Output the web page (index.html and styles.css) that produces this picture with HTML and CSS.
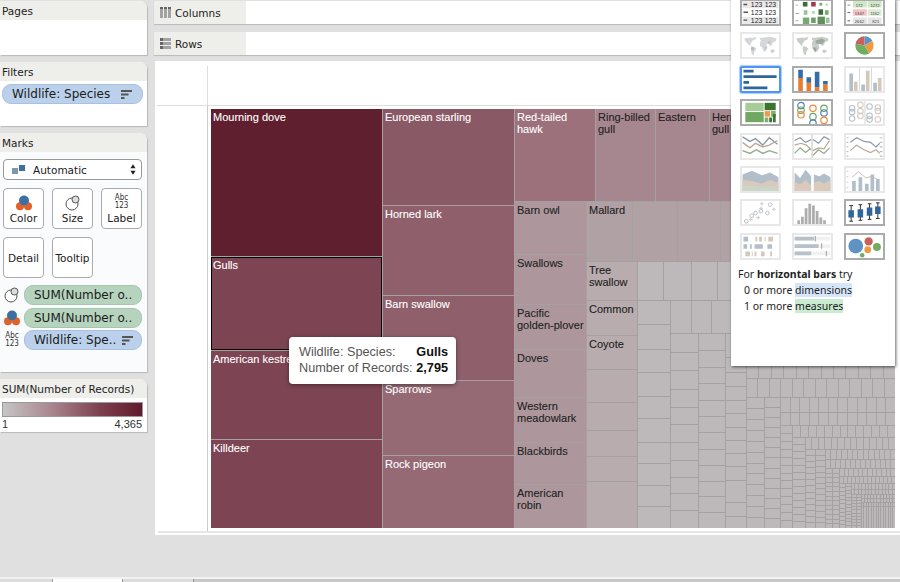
FILE: index.html
```html
<!DOCTYPE html>
<html lang="en">
<head>
<meta charset="utf-8">
<title>Wildlife treemap</title>
<link rel="stylesheet" href="styles.css">
</head>
<body>
<div class="app">
  <div class="workspace">
    <aside class="sidebar">
      <section class="card card-pages">
        <h2 class="card-title">Pages</h2>
      </section>
      <section class="card card-filters">
        <h2 class="card-title">Filters</h2>
        <div class="pill pill-blue pill-wide">
          <span class="pill-text">Wildlife: Species</span>
          <svg class="sort-icon" viewBox="0 0 11 9"><path d="M0 0h11v2H0zM0 3.500h7.500v2H0zM0 7h3.500v2H0z"/></svg>
        </div>
      </section>
      <section class="card card-marks">
        <h2 class="card-title">Marks</h2>
        <div class="mark-select">
          <svg class="auto-icon" viewBox="0 0 14 10"><path fill="#7f96b2" d="M0 3h6v6H0z"/><path fill="#3f6f9f" d="M7 0h6v6H7z"/></svg>
          <span class="mark-select-text">Automatic</span>
          <svg class="updown" viewBox="0 0 7 12"><path d="M3.500 0 6.500 4.500H.5zM3.500 12 .5 7.500h6z"/></svg>
        </div>
        <div class="mark-buttons">
          <div class="mark-btn">
            <svg class="btn-icon" viewBox="0 0 18 16"><circle cx="5" cy="11.300" r="4" fill="#e0622b"/><circle cx="13" cy="11.300" r="4" fill="#e0622b"/><circle cx="9" cy="5.500" r="5" fill="#3e6f9e"/></svg>
            <span>Color</span>
          </div>
          <div class="mark-btn">
            <svg class="btn-icon" viewBox="0 0 18 16"><circle cx="8" cy="9" r="6" fill="#fff" stroke="#555" stroke-width="1"/><circle cx="11.500" cy="4.500" r="3.500" fill="#ddd" stroke="#555" stroke-width="1"/></svg>
            <span>Size</span>
          </div>
          <div class="mark-btn">
            <div class="abc"><span>Abc</span><span>123</span></div>
            <span>Label</span>
          </div>
          <div class="mark-btn mark-btn-plain"><span>Detail</span></div>
          <div class="mark-btn mark-btn-plain"><span>Tooltip</span></div>
        </div>
        <div class="mark-fields">
          <div class="mark-field">
            <svg class="field-icon" viewBox="0 0 18 16"><circle cx="8" cy="9" r="6" fill="#fff" stroke="#555" stroke-width="1"/><circle cx="11.500" cy="4.500" r="3.500" fill="#ddd" stroke="#555" stroke-width="1"/></svg>
            <div class="pill pill-green"><span class="pill-text">SUM(Number o..</span></div>
          </div>
          <div class="mark-field">
            <svg class="field-icon" viewBox="0 0 18 16"><circle cx="5" cy="11.300" r="4" fill="#e0622b"/><circle cx="13" cy="11.300" r="4" fill="#e0622b"/><circle cx="9" cy="5.500" r="5" fill="#3e6f9e"/></svg>
            <div class="pill pill-green"><span class="pill-text">SUM(Number o..</span></div>
          </div>
          <div class="mark-field">
            <div class="abc abc-small"><span>Abc</span><span>123</span></div>
            <div class="pill pill-blue">
              <span class="pill-text">Wildlife: Spe..</span>
              <svg class="sort-icon" viewBox="0 0 11 9"><path d="M0 0h11v2H0zM0 3.500h7.500v2H0zM0 7h3.500v2H0z"/></svg>
            </div>
          </div>
        </div>
      </section>
      <section class="card card-legend">
        <h2 class="card-title">SUM(Number of Records)</h2>
        <div class="ramp"></div>
        <div class="ramp-labels"><span>1</span><span>4,365</span></div>
      </section>
    </aside>

    <main class="main">
      <div class="shelf">
        <div class="shelf-label">
          <svg class="shelf-icon" viewBox="0 0 11 11"><path d="M0 0h3v11H0zM4 0h3v11H4zM8 0h3v11H8z"/><path class="shelf-icon-head" d="M0 0h3v2H0zM4 0h3v2H4zM8 0h3v2H8z"/></svg>
          <span>Columns</span>
        </div>
        <div class="shelf-drop"></div>
      </div>
      <div class="shelf shelf-rows">
        <div class="shelf-label">
          <svg class="shelf-icon" viewBox="0 0 11 11"><path d="M0 0h11v3H0zM0 4h11v3H0zM0 8h11v3H0z"/><path class="shelf-icon-head" d="M0 0h3v3H0zM0 4h3v3H0zM0 8h3v3H0z"/></svg>
          <span>Rows</span>
        </div>
        <div class="shelf-drop"></div>
      </div>

      <div class="view">
        <div class="view-grid">
          <div class="view-corner"></div>
          <div class="view-head"></div>
          <div class="view-side"></div>
          <div class="view-pane">
            <div class="treemap">
              <div class="col w171">
                <div class="tile t-dove h147"><span>Mourning dove</span></div>
                <div class="tile t-gull h93 picked"><span>Gulls</span></div>
                <div class="tile t-gull h88"><span>American kestrel</span></div>
                <div class="tile t-gull fill"><span>Killdeer</span></div>
              </div>
              <div class="col w131">
                <div class="tile t-star h96"><span>European starling</span></div>
                <div class="tile t-star2 h89"><span>Horned lark</span></div>
                <div class="tile t-star2 h84"><span>Barn swallow</span></div>
                <div class="tile t-star3 h74"><span>Sparrows</span></div>
                <div class="tile t-star3 fill"><span>Rock pigeon</span></div>
              </div>
              <div class="col fill">
                <div class="row h92">
                  <div class="tile t-hawk w80"><span>Red-tailed<br>hawk</span></div>
                  <div class="tile t-ring w59 dark"><span>Ring-billed<br>gull</span></div>
                  <div class="tile t-ring w53 dark"><span>Eastern</span></div>
                  <div class="tile t-ring fill dark"><span>Herring<br>gull</span></div>
                </div>
                <div class="row fill">
                  <div class="col w71">
                    <div class="tile t-owl h52 dark"><span>Barn owl</span></div>
                    <div class="tile t-owl h49 dark"><span>Swallows</span></div>
                    <div class="tile t-owl h44 dark"><span>Pacific<br>golden-plover</span></div>
                    <div class="tile t-owl h47 dark"><span>Doves</span></div>
                    <div class="tile t-owl h44 dark"><span>Western<br>meadowlark</span></div>
                    <div class="tile t-owl h41 dark"><span>Blackbirds</span></div>
                    <div class="tile t-owl fill dark"><span>American<br>robin</span></div>
                  </div>
                  <div class="col fill">
                    <div class="row h59">
                      <div class="tile t-mall w45 dark"><span>Mallard</span></div>
                      <div class="tile t-mall w44"></div>
                      <div class="tile t-mall w42"></div>
                      <div class="tile t-mall fill"></div>
                    </div>
                    <div class="row fill">
                      <div class="col w50">
                        <div class="tile t-swal h38 dark"><span>Tree<br>swallow</span></div>
                        <div class="tile t-swal h34 dark"><span>Common</span></div>
                        <div class="tile t-swal h33 dark"><span>Coyote</span></div>
                        <div class="tile t-swal h32"></div>
                        <div class="tile t-swal h27"></div>
                        <div class="tile t-swal h25"></div>
                        <div class="tile t-swal h24"></div>
                        <div class="tile t-swal fill"></div>
                      </div>
                      <div class="col fill">
                        <div class="row h38" data-cells="26,28,26,30,30,30,30"></div>
                        <div class="row fill">
                          <div class="col w32" data-cells="24,25,23,24,22,24,21,22,21"></div>
                          <div class="col fill">
                            <div class="row h32" data-cells="21,20,20,20,20,20,20,20,20,20,20"></div>
                            <div class="row fill">
                              <div class="col w27" data-cells="19,18,19,18,17,18,18,17,16,17"></div>
                              <div class="col w26" data-cells="17,17,16,17,16,16,17,16,16,15,16"></div>
                              <div class="col w20" data-cells="24,15,14,14,13,14,13,13,13,14,22,14"></div>
                              <div class="spiral fill" id="spiral"></div>
                            </div>
                          </div>
                        </div>
                      </div>
                    </div>
                  </div>
                </div>
              </div>
            </div>
          </div>
        </div>
        <div class="view-foot"></div>
      </div>

      <div class="tooltip">
        <span class="tip-key">Wildlife: Species:</span><b class="tip-val">Gulls</b>
        <span class="tip-key">Number of Records:</span><b class="tip-val">2,795</b>
      </div>

      <div class="showme">
        <div class="thumbs">
          <div class="thumb on"><svg viewBox="0 0 39 25"><path fill="#e9e9e9" d="M0 0h39v8H0zM0 17h39v8H0z"/><path fill="#555" d="M1 3h4v1.500H1zM1 11.500h5V13H1zM1 20h4v1.500H1z"/><g class="th-num"><text x="9" y="7">123</text><text x="24" y="7">123</text><text x="9" y="15.500">123</text><text x="24" y="15.500">123</text><text x="9" y="24">123</text><text x="24" y="24">123</text></g></svg></div>
          <div class="thumb on"><svg viewBox="0 0 39 25"><path fill="#aaa" d="M1 4h3v1H1zM1 13h4v1H1zM1 21h3v1H1z"/><path fill="#3d6b39" d="M9 1h5v5H9z"/><path fill="#a33a4e" d="M18 1h5v5h-5z"/><path fill="#7aa874" d="M27 2h3v3h-3z"/><path fill="#a6c7a1" d="M34 3h2v2h-2z"/><path fill="#9dc096" d="M10 10h4v5h-4z"/><path fill="#b9d2b4" d="M19 11h3v3h-3z"/><path fill="#3d6b39" d="M26 9h5v6h-5z"/><path fill="#7aa874" d="M33 10h4v5h-4z"/><path fill="#7aa874" d="M9 18h7v7H9z"/><path fill="#6d9d67" d="M18 18h5v6h-5z"/><path fill="#5d915a" d="M25 17h8v8h-8z"/><path fill="#9dc096" d="M34 18h4v6h-4z"/></svg></div>
          <div class="thumb on"><svg viewBox="0 0 39 25"><path fill="#cfe6c7" d="M7 0h15v7H7zM23 0h15v7H23z"/><path fill="#f3c3c6" d="M7 9h15v7H7z"/><path fill="#dcebd7" d="M23 9h15v7H23z"/><path fill="#e5e5e5" d="M7 18h15v7H7zM23 18h15v7H23z"/><path fill="#666" d="M1 12h3v1H1zM1 21h3v1H1zM1 4h3v1H1z"/><g class="th-tiny"><text x="10" y="6">172</text><text x="26" y="6">1272</text><text x="9" y="15">1347</text><text x="26" y="15">1162</text><text x="9" y="24">2662</text><text x="28" y="24">821</text></g></svg></div>

          <div class="thumb off"><svg viewBox="0 0 39 25"><g fill="#b9bcc0"><path d="M2 5l5-1 5 0 3-1-1 3-3 1-2 3-1 3-3-3-2-2z"/><path d="M9 13l4 1 2 2-2 3-1 4-2-1-1-5z"/><path d="M19 4l3 0 8-1 7 2-1 3-3 1-1 3-2 1-2-2-2 0 1 4-2 4h-2l-2-5-2-1 0-4 1-2-1-1z"/><path d="M31 17l3 0 1 2-3 2-2-2z"/></g><g fill="#7c8ea0"><circle cx="11" cy="16" r="1.800"/><circle cx="25" cy="15" r="1"/><circle cx="29" cy="9" r="1.200"/><circle cx="33" cy="18" r=".9"/></g></svg></div>
          <div class="thumb off"><svg viewBox="0 0 39 25"><g fill="#a3ada2"><path d="M2 5l5-1 5 0 3-1-1 3-3 1-2 3-1 3-3-3-2-2z"/><path d="M9 13l4 1 2 2-2 3-1 4-2-1-1-5z"/><path d="M19 4l3 0 8-1 7 2-1 3-3 1-1 3-2 1-2-2-2 0 1 4-2 4h-2l-2-5-2-1 0-4 1-2-1-1z"/><path d="M31 17l3 0 1 2-3 2-2-2z"/></g><path fill="#5f6f5f" d="M23 7l7-2 3 2-3 4-4 0-3-1zM19 14l5 1-1 5-2-2z"/></svg></div>
          <div class="thumb on"><svg viewBox="0 0 39 25"><path fill="#c8605c" d="M19.500 12.500V2.500a10 10 0 0 0-9.800 8.200z"/><path fill="#5f93c4" d="M19.500 12.500V2.500a10 10 0 0 1 8.600 5z"/><path fill="#ef9a43" d="M19.500 12.500l8.600-5a10 10 0 0 1-3.500 13.600z"/><path fill="#70ad63" d="M19.500 12.500l5.100 8.600A10 10 0 0 1 9.700 10.700z"/></svg></div>

          <div class="thumb picked"><svg viewBox="0 0 39 25"><path fill="#2f659f" d="M1 2h11v3H1zM1 8h36v3H1zM1 14h6v3H1zM1 20h26v3H1z"/></svg></div>
          <div class="thumb on"><svg viewBox="0 0 39 25"><path fill="#e77e2f" d="M4 11h5v14H4zM13 16h5v9h-5zM22 21h5v4h-5zM31 18h5v7h-5z"/><path fill="#366da6" d="M4 2h5v9H4zM13 10h5v6h-5zM22 4h5v17h-5zM31 14h5v4h-5z"/></svg></div>
          <div class="thumb off"><svg viewBox="0 0 39 25"><path fill="#8094a8" d="M3 6h4v19H3zM16 18h4v7h-4zM29 16h4v9h-4z"/><path fill="#b8a48f" d="M8 15h4v10H8zM21 3h4v22h-4zM34 11h4v14h-4z"/><path fill="#bbb" d="M13.500 0h1v25h-1zM26.500 0h1v25h-1z"/></svg></div>

          <div class="thumb on"><svg viewBox="0 0 39 25"><path fill="#a6cc97" d="M3 2h20v9H3z"/><path fill="#70a863" d="M3 12h20v11H3z"/><path fill="#3b7330" d="M24 2h12v8H24z"/><path fill="#ef9a4f" d="M24 11h6v6h-6z"/><path fill="#7faf74" d="M31 11h5v6h-5zM24 18h4v5h-4z"/><path fill="#3b7330" d="M29 18h3v5h-3zM33 14h3v9h-3z"/></svg></div>
          <div class="thumb on"><svg viewBox="0 0 39 25" fill="none" stroke-width="1.300"><circle cx="7" cy="5" r="3.500" stroke="#4d80b5"/><circle cx="7" cy="10" r="3.500" stroke="#6caa5e"/><circle cx="7" cy="15" r="3.500" stroke="#ec8a39"/><circle cx="20" cy="8" r="3.500" stroke="#ec8a39"/><circle cx="20" cy="17" r="3.500" stroke="#6caa5e"/><circle cx="20" cy="24" r="3.500" stroke="#4d80b5"/><circle cx="32" cy="8" r="3.500" stroke="#6caa5e"/><circle cx="32" cy="13" r="3.500" stroke="#4d80b5"/><circle cx="32" cy="21" r="3.500" stroke="#ec8a39"/></svg></div>
          <div class="thumb off"><svg viewBox="0 0 39 25" fill="none" stroke-width="1.100"><circle cx="6" cy="8" r="3" stroke="#8094a8"/><circle cx="6" cy="12" r="3" stroke="#8094a8"/><circle cx="6" cy="19" r="3" stroke="#8094a8"/><circle cx="15" cy="4" r="3" stroke="#b8a48f"/><circle cx="15" cy="11" r="3" stroke="#b8a48f"/><circle cx="15" cy="16" r="3" stroke="#b8a48f"/><circle cx="25" cy="6" r="3" stroke="#8094a8"/><circle cx="25" cy="16" r="3" stroke="#8094a8"/><circle cx="25" cy="20" r="3" stroke="#8094a8"/><circle cx="34" cy="7" r="3" stroke="#b8a48f"/><circle cx="34" cy="11" r="3" stroke="#b8a48f"/><circle cx="34" cy="20" r="3" stroke="#b8a48f"/><path stroke="#bbb" d="M20 0v25"/></svg></div>

          <div class="thumb off lines"><svg viewBox="0 0 39 25" fill="none" stroke-width="1.500"><path stroke="#64778c" d="M0 2 8 7l6-3 8 7 7-8 9 7"/><path stroke="#a58c76" d="M0 8l8 6 6-5 8 4 7-2 9-5"/><path stroke="#6b8f65" d="M0 17l8 3 7-4 7 4 7-3 9 3"/></svg></div>
          <div class="thumb off lines"><svg viewBox="0 0 39 25" fill="none" stroke-width="1.300"><path stroke="#64778c" d="M0 6l6-3 6 5 6-3M20 5l6 4 6-7 6 3"/><path stroke="#a58c76" d="M0 11l7-2 6 2 5 5M20 17l6-3 6 1 6-9"/><path stroke="#6b8f65" d="M0 20l6-6 6 5 5-4M20 22l6-6 6 4 6-6"/><path stroke="#bbb" d="M19 0v25"/></svg></div>
          <div class="thumb off lines"><svg viewBox="0 0 39 25" fill="none" stroke-width="1.300"><path stroke="#64778c" d="M4 8l7-5 8 4 7 1 6 5 4-4"/><path stroke="#a58c76" d="M4 17l7-6 8 5 7 3 6-3 4 4"/><path stroke="#aaa" d="M0 3h2M0 8h2M0 13h2M0 18h2M0 23h2M36 3h3M36 8h3M36 13h3M36 18h3M36 23h3"/></svg></div>

          <div class="thumb off"><svg viewBox="0 0 39 25"><path fill="#8094a8" d="M0 7l10-4 11 5 9-3 9 5v15H0z"/><path fill="#c0a88e" d="M0 13l10 1 11 3 9-4 9 3v9H0z"/><path fill="#a8bba2" d="M0 20l10-1 11 2 9-1 9 1v4H0z"/></svg></div>
          <div class="thumb off"><svg viewBox="0 0 39 25"><path fill="#8094a8" d="M0 5l6 6 6-9 6 7V25H0zM21 7l6 2 5-3 7 4V25H21z"/><path fill="#c0a88e" d="M0 15l6 3 6-5 6 6v6H0zM21 16l6-2 5 3 7-4v12H21z"/></svg></div>
          <div class="thumb off"><svg viewBox="0 0 39 25"><path fill="#8094a8" d="M6 14h4v11H6zM13 10h4v15h-4zM20 17h4v8h-4zM26 7h4v18h-4zM32 12h4v13h-4z"/><path fill="none" stroke="#a58c76" d="M6 10l7-6 8 7 6-2 6 3"/><path fill="#aaa" d="M0 3h2v1H0zM0 9h2v1H0zM0 15h2v1H0zM0 21h2v1H0z"/></svg></div>

          <div class="thumb off"><svg viewBox="0 0 39 25" fill="none" stroke-width="1"><g stroke="#8094a8"><circle cx="4" cy="22" r="2"/><circle cx="10" cy="16" r="2"/><circle cx="20" cy="11" r="2"/><circle cx="27" cy="13" r="2"/><circle cx="30" cy="4" r="2"/><circle cx="14" cy="13" r="2"/></g><path stroke="#b8a48f" d="M7 20h4M9 18v4M15 18h4M17 16v4M18 8h4M20 6v4M32 9h4M34 7v4M19 3h4M21 1v4"/></svg></div>
          <div class="thumb off"><svg viewBox="0 0 39 25"><path fill="#777" d="M3 21h3v4H3zM7 17h3v8H7zM11 8h3v17h-3zM15 3h3v22h-3zM19 5h3v20h-3zM23 11h3v14h-3zM27 18h3v7h-3zM31 21h3v4h-3z"/></svg></div>
          <div class="thumb on"><svg viewBox="0 0 39 25"><path stroke="#222" fill="none" d="M5 5v17M3 5h4M3 22h4M15 4v17M13 4h4M13 21h4M25 3v17M23 3h4M23 20h4M34 2v17M32 2h4M32 19h4"/><path fill="#2f659f" d="M2 10h6v8H2zM12 9h6v9h-6zM22 7h6v9h-6zM31 6h6v8h-6z"/></svg></div>

          <div class="thumb off"><svg viewBox="0 0 39 25"><path fill="#8094a8" d="M1 2h5v5H1zM1 10h4v5H1zM8 10h2v5H8zM13 10h9v5h-9zM27 10h5v5h-5z"/><path fill="#b8a48f" d="M14 2h2v5h-2zM18 2h3v5h-3zM24 2h1v5h-1zM28 2h5v5h-5zM3 18h5v5H3zM10 18h1v5h-1zM13 18h2v5h-2zM20 18h4v5h-4zM30 18h2v5h-2z"/></svg></div>
          <div class="thumb off"><svg viewBox="0 0 39 25"><path fill="#e8e8e8" d="M0 2h39v4H0zM0 10h39v4H0zM0 18h39v4H0z"/><path fill="#8a98a6" d="M0 2h21v4H0zM0 10h26v4H0zM0 18h18v4H0z"/><path fill="#555" d="M22 1h1v6h-1zM29 9h1v6h-1zM34 17h1v6h-1z"/></svg></div>
          <div class="thumb on"><svg viewBox="0 0 39 25"><circle cx="10" cy="12" r="8" fill="#5f93c4"/><circle cx="24" cy="7" r="4.500" fill="#c8605c"/><circle cx="33" cy="13" r="4.300" fill="#70ad63"/><circle cx="23" cy="16" r="3.700" fill="#ef9a43"/><circle cx="17" cy="22" r="2.500" fill="#70ad63"/></svg></div>
        </div>
        <p class="hint hint-head">For <b>horizontal bars</b> try</p>
        <p class="hint">0 or more <span class="mark-dim">dimensions</span></p>
        <p class="hint">1 or more <span class="mark-mea">measures</span></p>
      </div>
    </main>
  </div>
  <footer class="tabs">
    <div class="tab w53"></div>
    <div class="tab tab-on w70"></div>
    <div class="tab w71"></div>
    <div class="tab tab-rest"></div>
  </footer>
</div>
<script src="script.js"></script>
</body>
</html>
```
FILE: styles.css
```css
* { box-sizing: border-box; }
html, body { margin: 0; padding: 0; }
body { width: 900px; height: 582px; overflow: hidden; background: #e0e0e0; font-family: "DejaVu Sans", sans-serif; color: #222; }
.app { width: 900px; height: 582px; display: flex; flex-direction: column; }
.workspace { flex: 1; display: flex; gap: 7px; min-height: 0; }

/* sidebar */
.sidebar { width: 147px; flex: none; display: flex; flex-direction: column; gap: 7px; padding-top: 1px; }
.card { background: #fff; border-radius: 0 7px 0 0; box-shadow: 1px 1px 1px #b9b9b9; overflow: hidden; }
.card-title { margin: 0; height: 19px; padding: 0 0 0 2px; background: #eeeeea; font-size: 10.500px; font-weight: 400; line-height: 20px; color: #222; white-space: nowrap; }
.card-pages { height: 54px; }
.card-filters { height: 64px; }
.card-marks { height: 239px; background: #fafbfd; }
.card-legend { height: 53px; }
.pill { height: 20px; display: flex; align-items: center; justify-content: space-between; border-radius: 9px; padding: 0 10px 0 9px; font-size: 12px; white-space: nowrap; color: #1c1c1c; }
.pill-blue { background: #bbd0ea; border: 1px solid #a9c1de; }
.pill-green { background: #b6d3bd; border: 1px solid #a6c5ae; }
.pill-wide { margin: 3px 4px 0 2px; }
.pill .sort-icon { width: 11px; height: 9px; fill: #555; flex: none; }

.mark-select { margin: 7px 5px 0 3px; height: 21px; display: flex; align-items: center; background: #fff; border: 1px solid #999; border-radius: 4px; padding: 0 5px 0 8px; font-size: 10.500px; }
.auto-icon { width: 14px; height: 10px; flex: none; margin-right: 7px; }
.mark-select-text { flex: 1; }
.updown { width: 6px; height: 11px; fill: #222; }
.mark-buttons { margin: 8px 5px 0 3px; display: grid; grid-template-columns: repeat(3, 41px); column-gap: 8px; row-gap: 8px; }
.mark-btn { height: 41px; background: #fff; border: 1px solid #aaa; border-radius: 4px; display: flex; flex-direction: column; align-items: center; justify-content: flex-end; padding-bottom: 4px; font-size: 10.500px; }
.mark-btn-plain { justify-content: center; padding-bottom: 0; }
.btn-icon { width: 18px; height: 16px; margin-bottom: 1px; }
.abc { display: flex; flex-direction: column; align-items: center; font-family: "DejaVu Sans Condensed", "DejaVu Sans", sans-serif; font-size: 8px; line-height: 8px; color: #333; margin-bottom: 2px; }
.mark-fields { margin: 7px 5px 0 0; display: flex; flex-direction: column; gap: 2.500px; }
.mark-field { display: flex; align-items: center; gap: 2px; }
.mark-field .pill { flex: 1; min-width: 0; justify-content: flex-start; gap: 0; }
.mark-field .pill .sort-icon { margin-left: 6px; }
.field-icon { width: 18px; height: 16px; flex: none; margin-left: 3px; margin-right: 1px; }
.abc-small { width: 18px; flex: none; margin: 0 1px 0 3px; }
.ramp { margin: 4px 4px 0 2px; height: 15px; border: 1px solid #999; background: linear-gradient(90deg, #c6c5c5, #a9858e 35%, #7d3f4e 70%, #5f1b2c); }
.ramp-labels { margin: 1px 5px 0 2px; display: flex; justify-content: space-between; font-family: "Liberation Sans", sans-serif; font-size: 11px; line-height: 12px; color: #333; }

/* main */
.main { flex: 1; min-width: 0; position: relative; display: flex; flex-direction: column; padding-top: 1px; }
.shelf { height: 23px; flex: none; display: flex; background: #fff; border-radius: 3px 0 0 0; box-shadow: 0 1px 1px #b9b9b9; overflow: hidden; }
.shelf-rows { margin-top: 8px; }
.shelf-label { width: 92px; background: #eeeeea; display: flex; align-items: center; gap: 4px; padding-left: 6px; font-size: 10.500px; }
.shelf-icon { width: 11px; height: 11px; fill: #a2a2a2; }
.shelf-icon-head { fill: #666; }
.shelf-drop { flex: 1; }
.view { height: 474px; margin: 6px 0 0 1px; background: #fff; padding: 5px 0 0 2px; display: flex; flex-direction: column; }
.view-grid { height: 463px; display: grid; grid-template-columns: 51px 1fr; grid-template-rows: 40px 1fr; }
.view-corner { border-right: 1px solid #ddd; border-bottom: 1px solid #ddd; }
.view-head { border-bottom: 1px solid #ddd; margin-right: 5px; }
.view-side { border-right: 1px solid #ccc; }
.view-pane { padding: 3px 5px 3px 3px; }
.view-foot { margin: 2px 0 0 1px; height: 2px; background: #e6e6e6; }

/* treemap */
.treemap { width: 684px; height: 419px; display: flex; gap: 1px; background: #a5a0a2; font-family: "Liberation Sans", sans-serif; font-size: 11px; line-height: 12px; overflow: hidden; }
.col, .row, .spiral, .sp-rest { display: flex; gap: 1px; min-width: 0; min-height: 0; }
.col { flex-direction: column; flex: none; }
.row { flex-direction: row; flex: none; }
.tile { flex: none; padding: 2px 0 0 2px; color: #fff; overflow: hidden; white-space: nowrap; -webkit-text-stroke: .1px currentColor; }
.tile.dark { color: #222; }
.fill { flex: 1 1 0; min-width: 0; min-height: 0; }
.picked { box-shadow: inset 0 0 0 1px #000; }
.cell { flex: none; background: #bdb9ba; }
.cell.fill { flex: 1 1 0; }
.t-dove { background: #601f2e; }
.t-gull { background: #7d4553; }
.t-star { background: #8a5966; }
.t-star2 { background: #8f606c; }
.t-star3 { background: #956a75; }
.t-hawk { background: #9c717c; }
.t-ring { background: #a6878f; }
.t-owl { background: #ad979c; }
.t-mall { background: #b0a1a5; }
.t-swal { background: #b8acaf; }
.w20 { width: 20px; } .w26 { width: 26px; } .w27 { width: 27px; } .w32 { width: 32px; } .w42 { width: 42px; } .w44 { width: 44px; } .w45 { width: 45px; } .w50 { width: 50px; } .w53 { width: 53px; } .w59 { width: 59px; } .w70 { width: 70px; } .w71 { width: 71px; } .w80 { width: 80px; } .w131 { width: 131px; } .w171 { width: 171px; }
.h24 { height: 24px; } .h25 { height: 25px; } .h27 { height: 27px; } .h32 { height: 32px; } .h33 { height: 33px; } .h34 { height: 34px; } .h38 { height: 38px; } .h41 { height: 41px; } .h44 { height: 44px; } .h47 { height: 47px; } .h49 { height: 49px; } .h52 { height: 52px; } .h59 { height: 59px; } .h74 { height: 74px; } .h84 { height: 84px; } .h88 { height: 88px; } .h89 { height: 89px; } .h92 { height: 92px; } .h93 { height: 93px; } .h96 { height: 96px; } .h147 { height: 147px; }

/* tooltip */
.tooltip { position: absolute; left: 135px; top: 337px; width: 167px; height: 47px; padding: 7px 8px 0 10px; display: grid; grid-template-columns: 1fr auto; column-gap: 3px; align-content: start; background: #fff; border-radius: 4px; box-shadow: 0 1px 4px rgba(0,0,0,.45); font-family: "Liberation Sans", sans-serif; font-size: 12.700px; line-height: 16px; color: #555; white-space: nowrap; }
.tip-val { color: #111; text-align: right; }

/* show me */
.showme { position: absolute; left: 577px; top: -1px; width: 164px; height: 367px; padding: 0 0 0 9px; background: #fff; box-shadow: 1px 1px 3px rgba(0,0,0,.6); font-family: "Noto Sans", sans-serif; font-size: 10.500px; }
.thumbs { display: grid; grid-template-columns: repeat(3, 41px); column-gap: 11px; row-gap: 6.400px; margin-bottom: 6px; }
.thumb { height: 27px; border: 2px solid #e8e8e8; overflow: hidden; background: #fff; }
.thumb svg { display: block; width: 37px; height: 23px; }
.thumb.on { border-color: #ababab; }
.thumb.off svg { opacity: .6; }
.thumb.lines svg { opacity: .75; }
.thumb.picked { border-color: #4e95f5; box-shadow: 0 0 1px 1px #a9ccfa; border-radius: 2px; }
.th-num text { font-family: "Liberation Sans", sans-serif; font-size: 7.500px; fill: #222; }
.th-tiny text { font-family: "Liberation Sans", sans-serif; font-size: 4.500px; fill: #444; }
.hint { margin: 0 0 0 4px; height: 16px; line-height: 16px; white-space: nowrap; color: #222; }
.hint-head { margin-left: -2px; }
.mark-dim { background: #d6e6fa; }
.mark-mea { background: #c9ecd0; }

/* tabs */
.tabs { height: 5px; flex: none; display: flex; border-top: 2px solid #f2f2f2; }
.tab { background: #dcdcdc; border-right: 1px solid #999; height: 3px; }
.tab-on { background: #fff; }
.tab-rest { flex: 1; border-right: 0; background: #c8c8c8; }
```
FILE: script.js
```js
// Fills the treemap's many small unlabelled tiles from their size lists.
function makeCell(parent, prop, size) {
  var c = document.createElement('div');
  c.className = 'cell';
  if (size === null) { c.classList.add('fill'); } else { c.style[prop] = size + 'px'; }
  parent.appendChild(c);
}

document.querySelectorAll('[data-cells]').forEach(function (el) {
  var prop = el.classList.contains('col') ? 'height' : 'width';
  var sizes = el.dataset.cells.split(',').map(Number);
  sizes.forEach(function (s) { makeCell(el, prop, s - 1); });
  makeCell(el, prop, null);
});

// The smallest tiles wind into the corner: [direction, strip size, tile size]
var steps = [
  ['r', 31, 13], ['r', 12, 12], ['r', 18, 11.5],
  ['c', 17, 11], ['c', 15, 10],
  ['r', 14, 10], ['r', 12, 9.5],
  ['c', 11, 8], ['r', 11, 8],
  ['c', 12, 6.8], ['r', 11, 6.5],
  ['c', 9, 6], ['c', 9, 5.5],
  ['r', 9, 5.5], ['r', 8, 5],
  ['c', 6, 4.5], ['c', 6, 4.5],
  ['r', 7, 4.5], ['r', 6, 4],
  ['c', 5, 4], ['c', 5, 3.5],
  ['r', 5, 3.5], ['r', 4, 3.5],
  ['c', 4, 3], ['c', 4, 3],
  ['r', 3, 3], ['r', 3, 3], ['r', 3, 2.5]
];

var box = document.getElementById('spiral');
var w = 148, h = 194;
steps.forEach(function (step) {
  var horizontal = step[0] === 'r';
  box.style.flexDirection = horizontal ? 'column' : 'row';
  var strip = document.createElement('div');
  strip.className = horizontal ? 'row' : 'col';
  strip.style[horizontal ? 'height' : 'width'] = step[1] + 'px';
  var len = horizontal ? w : h;
  var n = Math.max(1, Math.round((len + 1) / step[2]));
  for (var i = 0; i < n; i++) { makeCell(strip, '', null); }
  box.appendChild(strip);
  var rest = document.createElement('div');
  rest.className = 'sp-rest fill';
  box.appendChild(rest);
  box = rest;
  if (horizontal) { h -= step[1] + 1; } else { w -= step[1] + 1; }
});
box.style.flexDirection = 'row';
for (var j = 0; j < Math.round((w + 1) / 2.5); j++) { makeCell(box, '', null); }
```
